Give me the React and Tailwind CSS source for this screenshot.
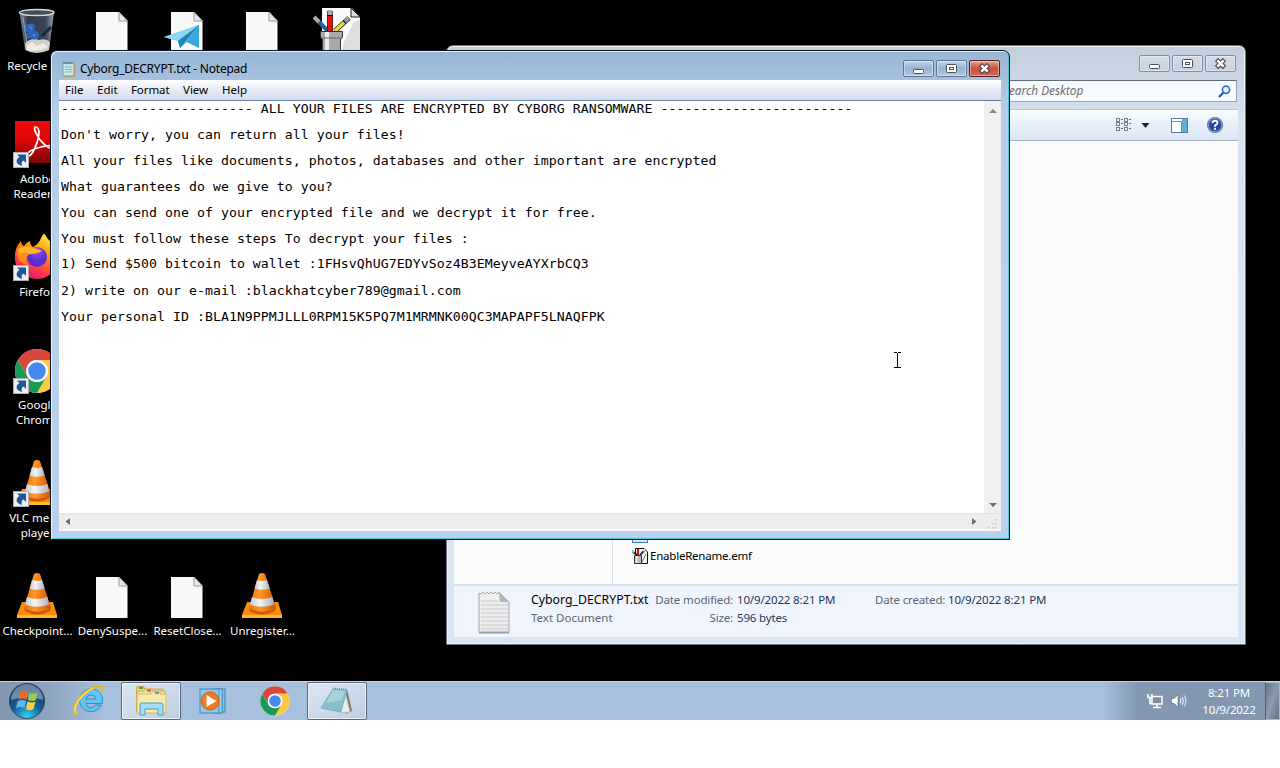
import React from "react";

const UI = "font-['Noto_Sans','Open_Sans',sans-serif]";

function Doc({ children }) {
  return (
    <svg width="48" height="48" viewBox="0 0 48 48">
      <path d="M8 4H31L39.5 13V45H8Z" fill="#f8f8f7" />
      <path d="M31 4V13H39.5Z" fill="#e8e8e8" stroke="#9a9a9a" strokeWidth="1" />
      {children}
    </svg>
  );
}

function RecycleBin() {
  return (
    <svg width="48" height="48" viewBox="0 0 48 48">
      <defs>
        <linearGradient id="bin" x1="0" x2="1">
          <stop offset="0" stopColor="#7a8896" />
          <stop offset=".25" stopColor="#2c3a4a" />
          <stop offset=".75" stopColor="#3b4654" />
          <stop offset="1" stopColor="#98a5b2" />
        </linearGradient>
      </defs>
      <path d="M6.5 4L12 42Q23 48 36 42L41 4Z" fill="url(#bin)" />
      <path d="M12 35Q19 29 26 32Q33 30 37 34L36 42Q23 48 12.500 42Z" fill="#cfd0c8" />
      <path d="M14 38L19 34L24 38L30 35L35 39Q24 44 14 42Z" fill="#f1eee0" />
      <path d="M11 20Q11 14 16 16Q22 14 22 20Q20 23 23 23Q28 25 25 30Q21 33 18 30Q13 32 13 27Q14 24 16 24Q11 24 11 20Z" fill="#2f62b8" />
      <path d="M16 18L19 21M20 26L22 28" stroke="#5b8ad8" strokeWidth="1.500" fill="none" />
      <path d="M29 28L38 19" stroke="#1a2745" strokeWidth="3" />
      <path d="M10 9L14 36" stroke="#aebac5" strokeWidth="1.200" opacity=".7" />
      <ellipse cx="23.700" cy="4.500" rx="17.300" ry="3" fill="#424d59" stroke="#d3dbe3" strokeWidth="1.300" />
    </svg>
  );
}

function Shortcut() {
  return (
    <svg className="absolute left-0 bottom-px" width="16" height="16" viewBox="0 0 16 16">
      <rect x=".5" y=".5" width="15" height="15" fill="#eceef0" stroke="#a9adb3" />
      <path d="M4 2.500H13V11L10.600 8.600Q7.700 10 9 14Q3 12 3.600 8.500Q4 6 6.500 5Z" fill="#1e559b" />
    </svg>
  );
}

function Adobe() {
  return (
    <svg width="48" height="48" viewBox="0 0 48 48">
      <defs>
        <linearGradient id="adb" x1="0" y1="0" x2="0" y2="1">
          <stop offset="0" stopColor="#f0080c" />
          <stop offset=".45" stopColor="#e00508" />
          <stop offset="1" stopColor="#7c0507" />
        </linearGradient>
      </defs>
      <rect x="2" y="0" width="43" height="42" fill="url(#adb)" />
      <path d="M23 6C19 5 24 17 31 23C37 29 43 29 41 26C38 22 18 28 15 32C13 36 17 37 21 29C26 19 28 7 23 6Z" fill="none" stroke="#fff" strokeWidth="1.7" />
    </svg>
  );
}

function Firefox() {
  return (
    <svg width="48" height="48" viewBox="0 0 48 48">
      <defs>
        <linearGradient id="ff" x1=".8" y1="0" x2=".3" y2="1">
          <stop offset="0" stopColor="#fff44f" />
          <stop offset=".4" stopColor="#ff980e" />
          <stop offset=".75" stopColor="#ff3647" />
          <stop offset="1" stopColor="#e31587" />
        </linearGradient>
        <radialGradient id="ffp" cx=".5" cy=".2">
          <stop offset="0" stopColor="#9059ff" />
          <stop offset="1" stopColor="#5b2bd0" />
        </radialGradient>
      </defs>
      <path d="M8 7Q8 11 11 12Q14 8 17 7Q17 11 20 13Q26 10 28 4L31 -1Q34 5 39 9Q46 17 44 27Q40 45 23 45Q4 43 2 26Q1 14 8 7Z" fill="url(#ff)" />
      <circle cx="24" cy="23" r="10" fill="url(#ffp)" />
      <path d="M4 16Q9 9 18 14H24Q22 19 15 21Q12 26 15 31Q3 29 4 16Z" fill="#ff8a1c" />
      <path d="M6 15Q14 10 22 15Q27 15 29 17Q24 20 17 20Q11 17 6 20Z" fill="#ffb52a" />
    </svg>
  );
}

function Chrome({ size }) {
  return (
    <svg width={size} height={size} viewBox="0 0 48 48">
      <circle cx="24" cy="24" r="22" fill="#fff" />
      <path d="M4.9 13A22 22 0 0 1 43.1 13H24A11 11 0 0 0 14.5 18.5L14.5 29.5Z" fill="#d8473c" />
      <path d="M43.1 13A22 22 0 0 1 24 46L33.5 29.5A11 11 0 0 0 33.5 18.5L24 13Z" fill="#fdca3f" />
      <path d="M24 46A22 22 0 0 1 4.9 13L14.5 29.5A11 11 0 0 0 33.5 29.5Z" fill="#1b9a55" />
      <circle cx="24" cy="24" r="11" fill="#f5f7fa" />
      <circle cx="24" cy="24" r="8.7" fill="#4688f1" />
    </svg>
  );
}

function Vlc() {
  return (
    <svg width="48" height="48" viewBox="0 0 48 48">
      <defs>
        <linearGradient id="cone" x1="0" x2="1">
          <stop offset="0" stopColor="#e9700a" />
          <stop offset=".4" stopColor="#ff9727" />
          <stop offset="1" stopColor="#cc5200" />
        </linearGradient>
        <linearGradient id="stripe" x1="0" x2="1">
          <stop offset="0" stopColor="#c4c9ce" />
          <stop offset=".4" stopColor="#f4f6f8" />
          <stop offset="1" stopColor="#aab2ba" />
        </linearGradient>
      </defs>
      <path d="M9 29H40L44 42V45H4V42Z" fill="#fa8c0b" />
      <path d="M4 42H44V45H4Z" fill="#ffb92a" />
      <path d="M11 34Q24 43 38 34L37 38Q24 45 12 38Z" fill="#c95c05" />
      <path d="M21 1Q24 -1 27 1L38 35Q24 42 11 35Z" fill="url(#cone)" />
      <path d="M19 7Q24 9 29 7L31.8 15.5Q24 18 16.5 15.5Z" fill="url(#stripe)" />
      <path d="M14 24Q24 28 34.5 24L36 31.5Q24 36 12 31.5Z" fill="url(#stripe)" />
    </svg>
  );
}

function Plane() {
  return (
    <Doc>
      <path d="M1 29L36 17V40L24 34L17 40L15 33Z" fill="#58bce5" />
      <path d="M1 29L36 17L15 33Z" fill="#8bd7f4" />
      <path d="M15 33L36 17L17 40Z" fill="#1f86b8" />
      <path d="M36 17V40L24 34Z" fill="#3ba7db" />
    </Doc>
  );
}

function Brushes() {
  return (
    <svg width="48" height="48" viewBox="0 0 48 48">
      <path d="M9 -1H38L47 9V48H9Z" fill="#fafafa" />
      <path d="M38 0V9H47Z" fill="#ddd" stroke="#222" />
      <path d="M41 14L30 36V48H47V12Z" fill="#dedede" />
      <path d="M4 12L15 23" stroke="#16689d" strokeWidth="4" />
      <path d="M1 9L6 14" stroke="#aaa" strokeWidth="4" />
      <path d="M17 3V23" stroke="#111" strokeWidth="6" />
      <path d="M17 8V23" stroke="#e31414" strokeWidth="5" />
      <path d="M17 2V7" stroke="#aaa" strokeWidth="5" />
      <path d="M36 10L22 23" stroke="#222" strokeWidth="5" />
      <path d="M31 14.500L22 23" stroke="#e6df30" strokeWidth="3.500" />
      <path d="M36 9.500L32 13.500" stroke="#999" strokeWidth="4" />
      <path d="M7.500 23.500H29.500V29.500L27.500 31V48H9.500V31L7.500 29.500Z" fill="#a9a9a9" stroke="#333" />
      <path d="M14 24V48" stroke="#ececec" strokeWidth="4" />
      <path d="M9 30H28" stroke="#666" />
    </svg>
  );
}

function BrushesSmall() {
  return (
    <svg width="16" height="16" viewBox="0 0 16 16">
      <path d="M3.500 .5H12L15.500 4V15.500H3.500Z" fill="#f4f4f4" stroke="#111" />
      <path d="M0 3L5 7" stroke="#222" strokeWidth="2" />
      <path d="M6 1V7" stroke="#c01818" strokeWidth="2" />
      <path d="M12 3L8 7" stroke="#333" strokeWidth="2" />
      <path d="M.5 3L2 4.500M11 3L12.500 1.500" stroke="#ddd" strokeWidth="1.200" />
      <path d="M2.500 7.500H9.500V15.500H2.500Z" fill="#bdbdbd" stroke="#333" />
      <path d="M4.500 8V15" stroke="#f4f4f4" strokeWidth="1.500" />
      <path d="M10 14L14 6" stroke="#777" />
    </svg>
  );
}

function DesktopIcon({ col, row, lines, shortcut, children }) {
  return (
    <div className={`flex flex-col items-center ${col} ${row}`}>
      <div className="relative mt-2 h-12 w-12 shrink-0">
        {children}
        {shortcut && <Shortcut />}
      </div>
      <div className="mt-[2px] flex flex-col items-center pl-[2px] text-[11.5px] leading-[15px] text-white [text-shadow:0_1px_2px_#000]">
        {lines.map((l) => (
          <span key={l} className="whitespace-nowrap">{l}</span>
        ))}
      </div>
    </div>
  );
}

function Caption({ kind, red, dim }) {
  const tone = red
    ? "border-[#571f1d] bg-linear-to-b from-[#e0a498] via-[#c9503c] via-50% to-[#cf6a55]"
    : dim
      ? "border-[#8190a4] bg-linear-to-b from-[#d3dce8] to-[#c6d1df]"
      : "border-[#5f7692] bg-linear-to-b from-[#c5d7eb] via-[#97b1cf] via-50% to-[#b3cbe4]";
  return (
    <div className={`flex h-[17px] w-[31px] items-center justify-center rounded-[2px] border shadow-[inset_0_0_0_1px_rgba(255,255,255,0.4)] ${tone}`}>
      <svg width="14" height="12" viewBox="0 0 14 12">
        {kind === "min" && <rect x="1.500" y="6.500" width="10" height="4" rx="1" fill="#fff" stroke="#4a525f" />}
        {kind === "max" && (
          <g fill="#fff" stroke="#4a525f">
            <rect x="1.500" y="1.500" width="10" height="8" rx="1" />
            <rect x="4.500" y="4.500" width="4" height="2" />
          </g>
        )}
        {kind === "close" && (
          <g>
            <path d="M2.500 1.500L10.500 9.500M10.500 1.500L2.500 9.500" stroke="#4a4550" strokeWidth="4.600" />
            <path d="M3.300 2.300L9.700 8.700M9.700 2.300L3.300 8.700" stroke="#fff" strokeWidth="2.600" />
          </g>
        )}
      </svg>
    </div>
  );
}

function Explorer() {
  return (
    <section className="absolute left-[446px] top-[45px] flex h-[600px] w-[800px] flex-col rounded-t-[7px] border border-[#6c7887] bg-linear-to-b from-[#c3cedc] via-[#d9e4f1] via-[80px] to-[#d9e5f2] px-[7px] pb-[7px] shadow-[inset_0_0_0_1px_#e8f0f8]">
      <div className="flex h-[34px] justify-end gap-[2px] pr-[2px] pt-[9px]">
        <Caption kind="min" dim />
        <Caption kind="max" dim />
        <Caption kind="close" dim />
      </div>
      <div className="flex h-[23px] justify-end pr-px">
        <div className="flex h-[22px] w-[240px] items-center justify-between border border-[#98a5b5] border-t-[#5f6c7c] bg-[#f7fafe] pl-[5px] pr-[5px]">
          <span className="text-[11.8px] italic text-[#6d6d6d]">Search Desktop</span>
          <svg width="13" height="13" viewBox="0 0 13 13">
            <path d="M1 12L5.500 7.500" stroke="#2b4c9b" strokeWidth="2.200" />
            <circle cx="8" cy="4.800" r="3.600" fill="#e6f2ff" stroke="#3871c9" strokeWidth="1.700" />
          </svg>
        </div>
      </div>
      <div className="mt-[6px] flex h-[32px] items-center justify-end border-b border-t border-b-[#a5b3c4] border-t-[#b8c6d8] bg-linear-to-b from-[#fbfdff] via-[#e6effa] via-50% to-[#dce7f5] pr-[14px]">
        <svg width="16" height="14" viewBox="0 0 16 14">
          {[0, 8].map((x) =>
            [0, 4, 9].map((y) => (
              <g key={`${x}-${y}`}>
                <rect x={x + 0.5} y={y + 0.5} width="3" height="3" fill="#eef3f8" stroke="#76808c" />
                <path d={`M${x + 5} ${y + 1.5}H${x + 7}`} stroke="#59626d" />
              </g>
            )),
          )}
        </svg>
        <svg className="ml-[9px]" width="9" height="5" viewBox="0 0 9 5">
          <path d="M.5 0H8.500L4.500 5Z" fill="#1c2440" />
        </svg>
        <svg className="ml-[21px]" width="17" height="15" viewBox="0 0 17 15">
          <rect x=".5" y=".5" width="16" height="14" fill="#fff" stroke="#557a9d" />
          <rect x="11" y="1" width="5" height="13" fill="#5fb0cf" />
          <path d="M1 3.500H10.500V14" fill="none" stroke="#6a8eb0" />
        </svg>
        <svg className="ml-[18px]" width="18" height="18" viewBox="0 0 18 18">
          <circle cx="9" cy="9" r="7.500" fill="#2645a3" stroke="#7784a3" strokeWidth="1.200" />
          <circle cx="9" cy="9" r="6.500" fill="none" stroke="#c0cdec" strokeWidth=".6" />
          <path d="M6.300 7.200Q6.500 4.700 9 4.700T11.500 6.900Q11.500 8.200 9.100 9.300V10.700" fill="none" stroke="#fff" strokeWidth="1.900" />
          <rect x="8.100" y="11.800" width="2" height="2" fill="#fff" />
        </svg>
      </div>
      <div className="flex min-h-0 flex-1 bg-[#fcfcfc]">
        <div className="w-[159px] border-r border-[#d7e1f0]" />
        <div className="flex flex-col pb-[19px] pl-[19px] justify-end">
          <div className="h-[7px] w-4 border border-[#3c7fb1] bg-[#d6ecf7]" />
          <div className="mt-[4px] flex h-[18px] items-center gap-[2px]">
            <BrushesSmall />
            <span className="text-[11.5px] tracking-[-0.22px] text-black">EnableRename.emf</span>
          </div>
        </div>
      </div>
      <div className="flex h-[53px] border-t-2 border-[#d5e0ef] bg-[#f0f4fc] text-[11.5px] leading-[18px]">
        <svg className="ml-[24px] mt-[5px]" width="33" height="43" viewBox="0 0 33 43">
          <path d="M1 2L3 3L5 1L7 3L9 1L11 3L13 1L15 3L17 1L19 3L21 1L31 11V41.500H1Z" fill="#ececed" stroke="#a7a9ac" />
          <path d="M3 10H20M3 14H30M3 18H30M3 22H30M3 26H30M3 30H30M3 34H30M3 38H30" stroke="#c9cbcf" />
          <path d="M21 1L22 11H31Z" fill="#b1b4b8" />
          <path d="M1 41.500H31" stroke="#9b9ea2" strokeWidth="2" />
        </svg>
        <div className="ml-[20px] mt-[5px] w-[124px] whitespace-nowrap">
          <div className="text-[12.3px] text-black">Cyborg_DECRYPT.txt</div>
          <div className="text-[#5a6779]">Text Document</div>
        </div>
        <div className="mt-[5px] grid h-9 grid-cols-[78px_134px_69px_auto] gap-x-[4px] whitespace-nowrap text-[#1e395b] tracking-[-0.15px]">
          <span className="text-right text-[#5a6779]">Date modified:</span>
          <span>10/9/2022 8:21 PM</span>
          <span className="text-[#5a6779]">Date created:</span>
          <span>10/9/2022 8:21 PM</span>
          <span className="text-right text-[#5a6779]">Size:</span>
          <span>596 bytes</span>
        </div>
      </div>
    </section>
  );
}

const LINES = [
  "------------------------ ALL YOUR FILES ARE ENCRYPTED BY CYBORG RANSOMWARE ------------------------",
  "Don't worry, you can return all your files!",
  "All your files like documents, photos, databases and other important are encrypted",
  "What guarantees do we give to you?",
  "You can send one of your encrypted file and we decrypt it for free.",
  "You must follow these steps To decrypt your files :",
  "1) Send $500 bitcoin to wallet :1FHsvQhUG7EDYvSoz4B3EMeyveAYXrbCQ3",
  "2) write on our e-mail :blackhatcyber789@gmail.com",
  "Your personal ID :BLA1N9PPMJLLL0RPM15K5PQ7M1MRMNK00QC3MAPAPF5LNAQFPK",
];

function Notepad() {
  return (
    <section className="absolute left-[50px] top-[50px] flex h-[490px] w-[960px] flex-col rounded-t-[7px] border border-[#0a1118] bg-[#b9d1ea] bg-linear-to-b from-[#97b5d5] via-[#b6cee8] via-[60px] to-[#b9d1ea] px-[8px] pb-[8px] shadow-[inset_1px_1px_0_#e9f3fb,inset_-1px_-1px_0_#46c8d8]">
      <header className="flex h-[29px] shrink-0 justify-between">
        <div className="flex items-center gap-[4px] pl-[3px] pt-[6px]">
          <svg width="14" height="16" viewBox="0 0 14 16">
            <rect x="1" y="2" width="11" height="13" fill="#bfe6ea" stroke="#74a9b0" />
            <path d="M3 6H10M3 8.500H10M3 11H10" stroke="#80bcc4" />
            <path d="M2 1V3M4 1V3M6 1V3M8 1V3M10 1V3" stroke="#566b70" />
            <path d="M12.500 3V15.500H2" fill="none" stroke="#b39a62" />
          </svg>
          <span className="text-[12px] tracking-[-0.23px] text-black">Cyborg_DECRYPT.txt - Notepad</span>
        </div>
        <div className="flex gap-[2px] pr-px pt-[9px]">
          <Caption kind="min" />
          <Caption kind="max" />
          <Caption kind="close" red />
        </div>
      </header>
      <nav className="flex h-[20px] shrink-0 items-center bg-linear-to-b from-[#ffffff] via-[#e5eaf5] via-50% to-[#d5dbee] pl-[6px] text-[11.5px] text-black">
        <span className="w-[32px]">File</span>
        <span className="w-[34px]">Edit</span>
        <span className="w-[52px] tracking-[-0.1px]">Format</span>
        <span className="w-[39px]">View</span>
        <span>Help</span>
      </nav>
      <div className="flex min-h-0 flex-1 flex-col border-b-2 border-t border-[#f4f8fc] border-t-[#6484a8] bg-white">
        <div className="flex min-h-0 flex-1">
          <pre className="flex-1 origin-top-left scale-y-[0.91] pl-[2px] pt-[2px] font-['DejaVu_Sans_Mono','Liberation_Mono',monospace] text-[13.2px] leading-[14.2857px] tracking-[0.055px] text-black">
            {LINES.join("\n\n")}
          </pre>
          <div className="flex w-[17px] flex-col items-center justify-between bg-[#f0f0f0] pb-[6px] pt-[8px]">
            <svg width="8" height="4" viewBox="0 0 8 4"><path d="M0 4L4 0L8 4Z" fill="#868686" /></svg>
            <svg width="8" height="4" viewBox="0 0 8 4"><path d="M0 0H8L4 4Z" fill="#6d6d6d" /></svg>
          </div>
        </div>
        <div className="flex h-[16px] shrink-0 items-center justify-between border-t border-[#e2e2e2] bg-[#ededed] pb-px pl-[6px] pr-[3px]">
          <svg width="5" height="7" viewBox="0 0 5 7"><path d="M5 0V7L.5 3.500Z" fill="#6d6d6d" /></svg>
          <div className="flex items-center gap-[11px]">
            <svg width="5" height="7" viewBox="0 0 5 7"><path d="M0 0V7L4.500 3.500Z" fill="#6d6d6d" /></svg>
            <svg className="mt-[5px]" width="10" height="10" viewBox="0 0 10 10">
              <g fill="#c4c4c4">
                <rect x="7" y="0" width="1.500" height="1.500" /><rect x="7" y="4" width="1.500" height="1.500" /><rect x="7" y="8" width="1.500" height="1.500" />
                <rect x="4" y="4" width="1.500" height="1.500" /><rect x="4" y="8" width="1.500" height="1.500" /><rect x="0" y="8" width="1.500" height="1.500" />
              </g>
            </svg>
          </div>
        </div>
      </div>
    </section>
  );
}

function StartOrb() {
  return (
    <svg width="38" height="38" viewBox="0 0 38 38">
      <defs>
        <radialGradient id="orb" cx=".5" cy=".95" r=".9">
          <stop offset="0" stopColor="#35d3f5" />
          <stop offset=".45" stopColor="#17639c" />
          <stop offset="1" stopColor="#113257" />
        </radialGradient>
      </defs>
      <circle cx="19" cy="19" r="17.500" fill="url(#orb)" stroke="#2a4764" />
      <path d="M3 18A16 16 0 0 1 35 18Q19 12 3 18Z" fill="#fff" opacity=".38" />
      <path d="M13 9Q16 7 20 10L18.500 17.500Q14 15.500 10 18Z" fill="#f0652b" />
      <path d="M21.500 10.500Q25 13 29.500 10.500L28 18Q24 20 20 18Z" fill="#9bcb45" />
      <path d="M9.500 19.500Q14 17 18 19L16.500 26Q12 24 8 26.500Z" fill="#5cb8ee" />
      <path d="M19.500 19.500Q24 21.700 27.500 19.500L25.500 27Q22 29.500 18 27Z" fill="#ffcf3d" />
    </svg>
  );
}

function InternetExplorer() {
  return (
    <svg width="34" height="34" viewBox="0 0 34 34">
      <path d="M29.500 21A11.500 11.500 0 1 1 30.500 17.500V19.500H14Q15 24 19 24Q21.500 24 23 21ZM14 15H24Q23.500 11 19 11T14 15Z" fill="#63c4f2" stroke="#2b8fca" fillRule="evenodd" />
      <path d="M5 31C-3 27 8 9 21 4C27 1.500 32 2 30 7" fill="none" stroke="#edb720" strokeWidth="2.800" />
      <path d="M4 29C0 24 9 10 21 4.500" fill="none" stroke="#ffe360" strokeWidth="1.300" />
    </svg>
  );
}

function Folder() {
  return (
    <svg width="34" height="32" viewBox="0 0 34 32">
      <path d="M2.500 4V3Q2.500 1.500 4 1.500H9Q10.500 1.500 10.500 4H29V27H2.500Z" fill="#ecd57f" stroke="#c3a655" />
      <rect x="5" y="2" width="4" height="2" fill="#4a9c46" />
      <path d="M4 6H10Q10.500 4 12 4H17Q18.500 4 18.500 6H31V27H4Z" fill="#f4e097" stroke="#cdb160" />
      <rect x="13" y="4.500" width="4" height="2" fill="#ce5135" />
      <path d="M3 9H17Q18 6.500 19.500 6.500H25Q26.500 6.500 26.500 9H32V28H3Z" fill="#f8e9ab" stroke="#d4ba6b" />
      <rect x="21" y="7" width="4" height="2" fill="#5c94c8" />
      <path d="M6 30V20Q6 18 8 18H27Q29 18 29 20V30H24V24H11V30Z" fill="#a7ddf3" stroke="#4b9cc4" />
    </svg>
  );
}

function MediaPlayer() {
  return (
    <svg width="28" height="28" viewBox="0 0 28 28">
      <rect x="17" y="2" width="9" height="23" fill="#79bce2" stroke="#4089b7" />
      <rect x="15" y="2" width="8" height="24" fill="#a3d4ee" stroke="#4089b7" />
      <rect x="1" y="2" width="19" height="24" fill="#8fc8e9" stroke="#3f8abb" />
      <circle cx="11" cy="14" r="9" fill="#f37a1e" stroke="#d35c0c" />
      <path d="M7.500 8L17.500 14L7.500 20Z" fill="#fff" />
    </svg>
  );
}

function NotepadPad() {
  return (
    <svg width="34" height="30" viewBox="0 0 34 30">
      <path d="M27 3L32 25L26 28L22 10Z" fill="#8a7558" />
      <path d="M25 5L30 26L20 27Z" fill="#e8edf0" stroke="#b5bfc3" />
      <path d="M13 3L27 4L21 26L1 22Z" fill="#86c0ca" stroke="#6fa5af" strokeWidth=".7" />
      <path d="M13 4L25 5L22 14L6 17Z" fill="#b5dde2" opacity=".7" />
      <path d="M13 2.500L27 3.500" stroke="#8b999d" strokeWidth="2" strokeDasharray="1 1" />
    </svg>
  );
}

function TaskButton({ active, children }) {
  return (
    <div
      className={`flex h-[38px] w-[60px] items-center justify-center rounded-[2px] ${
        active ? "border border-[#56697f] bg-linear-to-br from-[#dce6f1] to-[#bdcfe4] shadow-[inset_0_0_0_1px_rgba(255,255,255,0.6)]" : ""
      }`}
    >
      {children}
    </div>
  );
}

function Taskbar() {
  return (
    <footer className="flex h-[39px] items-center border-t border-[#c6d3e1] bg-[linear-gradient(90deg,#8296ae_0,#8ba0b9_40px,#a6c0de_105px,#a6c0de_1103px,#8297b0_1138px,#8297b0_100%)]">
      <div className="flex w-[59px] items-center pl-[8px]"><StartOrb /></div>
      <div className="flex gap-[2px]">
        <TaskButton><InternetExplorer /></TaskButton>
        <TaskButton active><Folder /></TaskButton>
        <TaskButton><MediaPlayer /></TaskButton>
        <TaskButton><Chrome size={32} /></TaskButton>
        <TaskButton active><NotepadPad /></TaskButton>
      </div>
      <div className="ml-auto flex h-full items-center">
        <svg width="16" height="16" viewBox="0 0 16 16">
          <path d="M5 3.500H15V11H5Z" fill="#7f8f9f" stroke="#fff" strokeWidth="1.500" />
          <path d="M10 11V14M6 14.500H14M1 1V4.500H5V1M3 5V10.500H5" fill="none" stroke="#fff" strokeWidth="1.600" />
        </svg>
        <svg className="ml-[8px]" width="16" height="14" viewBox="0 0 16 14">
          <path d="M.5 4.500H3L7 .8V13.200L3 9.500H.5Z" fill="#fff" stroke="#51606f" strokeWidth=".6" />
          <path d="M9.300 4.500Q10.600 7 9.300 9.500M11.300 3Q13.500 7 11.300 11M13.300 1.500Q16.500 7 13.300 12.500" fill="none" stroke="#f1f5f8" />
        </svg>
        <div className="ml-[14px] w-[56px] text-center text-[11.5px] leading-[17px] tracking-[-0.15px] text-white">
          <div>8:21 PM</div>
          <div>10/9/2022</div>
        </div>
        <div className="ml-[8px] h-full w-[15px] border border-[#a9b8c8] border-l-[#4f6177] bg-linear-to-br from-[#66788c] via-[#8b9bac] to-[#607287]" />
      </div>
    </footer>
  );
}

export default function App() {
  return (
    <div className={`h-[768px] w-[1280px] overflow-hidden bg-white ${UI}`}>
      <main className="relative flex h-[720px] flex-col justify-between bg-black">
        <div className="-ml-px grid h-[681px] grid-cols-[repeat(5,75px)] grid-rows-[repeat(6,113px)] content-start">
          <DesktopIcon col="col-start-1" row="row-start-1" lines={["Recycle Bin"]}><RecycleBin /></DesktopIcon>
          <DesktopIcon col="col-start-2" row="row-start-1" lines={[]}><Doc /></DesktopIcon>
          <DesktopIcon col="col-start-3" row="row-start-1" lines={[]}><Plane /></DesktopIcon>
          <DesktopIcon col="col-start-4" row="row-start-1" lines={[]}><Doc /></DesktopIcon>
          <DesktopIcon col="col-start-5" row="row-start-1" lines={[]}><Brushes /></DesktopIcon>
          <DesktopIcon col="col-start-1" row="row-start-2" lines={["Adobe", "Reader X"]} shortcut><Adobe /></DesktopIcon>
          <DesktopIcon col="col-start-1" row="row-start-3" lines={["Firefox"]} shortcut><Firefox /></DesktopIcon>
          <DesktopIcon col="col-start-1" row="row-start-4" lines={["Google", "Chrome"]} shortcut><Chrome size={48} /></DesktopIcon>
          <DesktopIcon col="col-start-1" row="row-start-5" lines={["VLC media", "player"]} shortcut><Vlc /></DesktopIcon>
          <DesktopIcon col="col-start-1" row="row-start-6" lines={["Checkpoint..."]}><Vlc /></DesktopIcon>
          <DesktopIcon col="col-start-2" row="row-start-6" lines={["DenySuspe..."]}><Doc /></DesktopIcon>
          <DesktopIcon col="col-start-3" row="row-start-6" lines={["ResetClose..."]}><Doc /></DesktopIcon>
          <DesktopIcon col="col-start-4" row="row-start-6" lines={["Unregister..."]}><Vlc /></DesktopIcon>
        </div>
        <Taskbar />
        <Explorer />
        <Notepad />
        <svg className="absolute left-[893px] top-[352px]" width="9" height="17" viewBox="0 0 9 17">
          <path d="M1 .5H4M5 .5H8M4.500 1V16M1 15.500H4M5 15.500H8" stroke="#000" fill="none" />
        </svg>
      </main>
    </div>
  );
}
